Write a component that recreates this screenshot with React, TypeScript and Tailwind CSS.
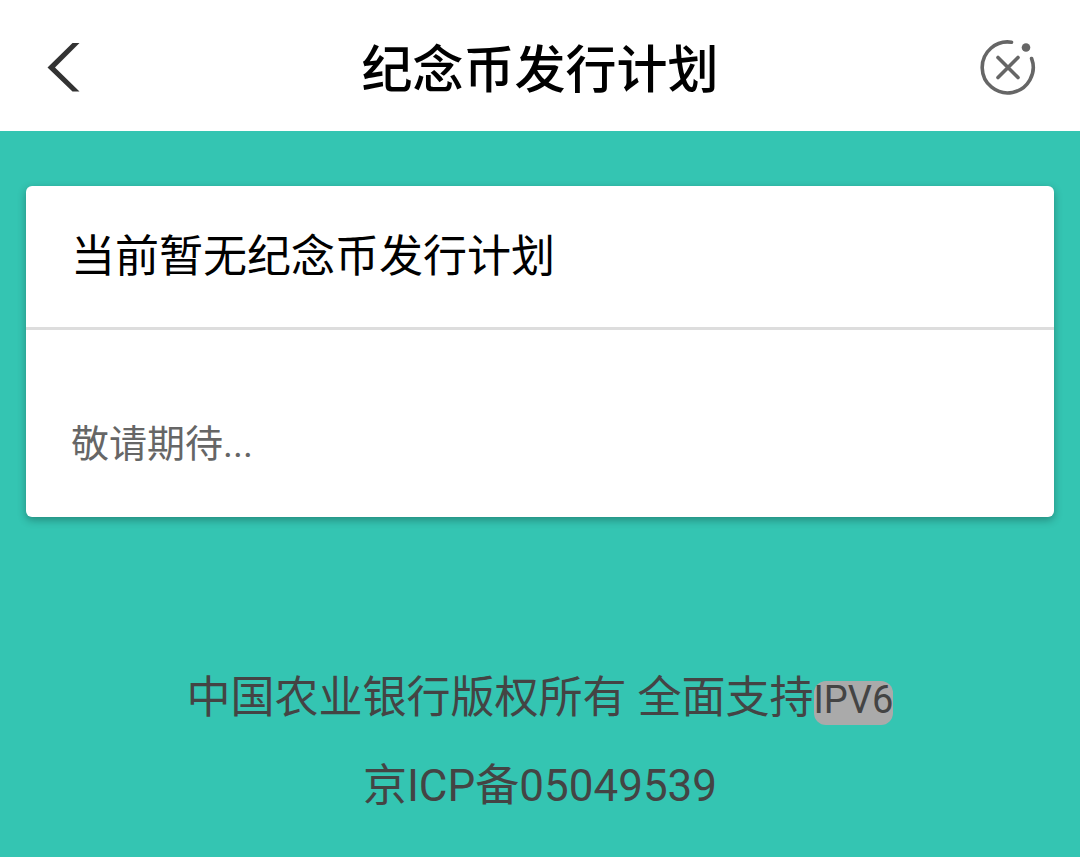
export default function App() {
  return (
    <div className="flex min-h-screen flex-col bg-[#34c5b2] font-[Roboto,'Noto_Sans_CJK_SC',sans-serif]">
      <header className="flex h-[131px] items-center justify-between bg-white px-11 pt-1">
        <button type="button" aria-label="返回" className="flex h-14 w-14 items-center">
          <svg width="40" height="56" viewBox="0 0 40 56" fill="#333">
            <path d="M28.500 3 H35.500 L11 27.500 L35.500 51.500 H28.500 L3.500 27.500 Z" />
          </svg>
        </button>
        <h1 className="pt-1.5 text-[51px] leading-[72px] font-medium text-black">纪念币发行计划</h1>
        <button type="button" aria-label="关闭" className="flex h-14 w-14 items-center justify-center">
          <svg width="56" height="56" viewBox="0 0 56 56" fill="none" stroke="#666" strokeWidth="3.600" strokeLinecap="round">
            <path d="M31.500 2.200 A25.500 25.500 0 1 0 51.600 18.500" />
            <path d="M18 17.500 L38 37.500 M38 17.500 L18 37.500" />
            <circle cx="46" cy="7.500" r="4.300" fill="#666" stroke="none" />
          </svg>
        </button>
      </header>
      <main className="px-[26px] pt-[55px]">
        <section className="rounded-md bg-white shadow-[0_3px_8px_rgba(0,0,0,0.3)]">
          <h2 className="border-b-3 border-[#dddddd] px-[45px] pt-[35px] pb-[34px] text-[44px] leading-[72px] font-normal text-black">
            当前暂无纪念币发行计划
          </h2>
          <p className="px-[45px] pt-21 pb-[43px] text-[38px] leading-[60px] text-[#666]">敬请期待...</p>
        </section>
      </main>
      <footer className="pt-[137px] text-center text-[44px] leading-[88px] text-[#444]">
        <p>
          中国农业银行版权所有 全面支持
          <span className="inline-block rounded-xl bg-[#aaa] pb-1.5 text-[38px] leading-[38px]">IPV6</span>
        </p>
        <p>京ICP备05049539</p>
      </footer>
    </div>
  );
}
